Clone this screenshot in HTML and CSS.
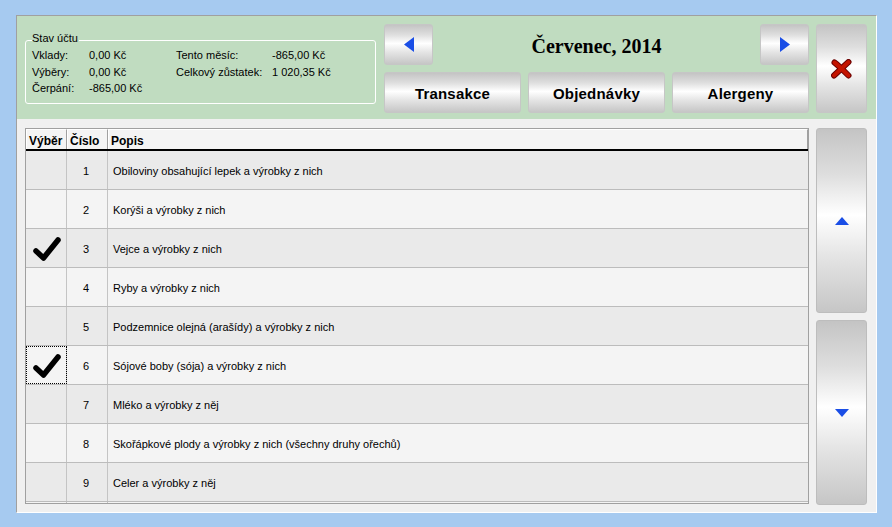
FILE: index.html
```html
<!DOCTYPE html>
<html lang="cs">
<head>
<meta charset="utf-8">
<title>Alergeny</title>
<link rel="stylesheet" href="styles.css">
</head>
<body>
<div class="window">
  <div class="top">
    <div class="groupbox">
      <span class="legend">Stav účtu</span>
      <div class="stats">
        <span>Vklady:</span><span>0,00 Kč</span><span>Tento měsíc:</span><span>-865,00 Kč</span>
        <span>Výběry:</span><span>0,00 Kč</span><span>Celkový zůstatek:</span><span>1 020,35 Kč</span>
        <span>Čerpání:</span><span>-865,00 Kč</span><span></span><span></span>
      </div>
    </div>
    <div class="controls">
      <div class="month">
        <button class="btn nav"><svg width="10" height="15" viewBox="0 0 10 15"><polygon points="10,0 10,15 0,7.5" fill="#1a4ee6"/></svg></button>
        <div class="title">Červenec, 2014</div>
        <button class="btn nav"><svg width="10" height="15" viewBox="0 0 10 15"><polygon points="0,0 0,15 10,7.5" fill="#1a4ee6"/></svg></button>
      </div>
      <button class="btn close"><svg width="21" height="20" viewBox="0 0 21 20">
        <path d="M3.5 3.5 C7 6 12 11 17.5 16.5" stroke="#6a0000" stroke-width="6" stroke-linecap="round" fill="none"/>
        <path d="M17.5 3 C12.5 7.5 8 12 3 16.5" stroke="#6a0000" stroke-width="6" stroke-linecap="round" fill="none"/>
        <path d="M3.5 3.5 C7 6 12 11 17.5 16.5" stroke="#c41400" stroke-width="4" stroke-linecap="round" fill="none"/>
        <path d="M17.5 3 C12.5 7.5 8 12 3 16.5" stroke="#c41400" stroke-width="4" stroke-linecap="round" fill="none"/>
      </svg></button>
      <button class="btn tab">Transakce</button>
      <button class="btn tab">Objednávky</button>
      <button class="btn tab">Alergeny</button>
    </div>
  </div>
  <div class="bottom">
    <div class="grid">
      <div class="head">
        <div class="hcell">Výběr</div>
        <div class="hcell">Číslo</div>
        <div class="hcell">Popis</div>
      </div>
      <div class="row odd"><div class="cell sel"></div><div class="cell num">1</div><div class="cell desc">Obiloviny obsahující lepek a výrobky z nich</div></div>
      <div class="row even"><div class="cell sel"></div><div class="cell num">2</div><div class="cell desc">Korýši a výrobky z nich</div></div>
      <div class="row odd"><div class="cell sel"><svg class="check" width="28" height="26" viewBox="0 0 28 26"><path d="M3 15 L10.5 22 L25 4" stroke="#000" stroke-width="5.5" stroke-linecap="round" stroke-linejoin="round" fill="none"/></svg></div><div class="cell num">3</div><div class="cell desc">Vejce a výrobky z nich</div></div>
      <div class="row even"><div class="cell sel"></div><div class="cell num">4</div><div class="cell desc">Ryby a výrobky z nich</div></div>
      <div class="row odd"><div class="cell sel"></div><div class="cell num">5</div><div class="cell desc">Podzemnice olejná (arašídy) a výrobky z nich</div></div>
      <div class="row even"><div class="cell sel focus"><svg class="check" width="28" height="26" viewBox="0 0 28 26"><path d="M3 15 L10.5 22 L25 4" stroke="#000" stroke-width="5.5" stroke-linecap="round" stroke-linejoin="round" fill="none"/></svg></div><div class="cell num">6</div><div class="cell desc">Sójové boby (sója) a výrobky z nich</div></div>
      <div class="row odd"><div class="cell sel"></div><div class="cell num">7</div><div class="cell desc">Mléko a výrobky z něj</div></div>
      <div class="row even"><div class="cell sel"></div><div class="cell num">8</div><div class="cell desc">Skořápkové plody a výrobky z nich (všechny druhy ořechů)</div></div>
      <div class="row odd"><div class="cell sel"></div><div class="cell num">9</div><div class="cell desc">Celer a výrobky z něj</div></div>
      <div class="row even stub"><div class="cell sel"></div><div class="cell num"></div><div class="cell desc"></div></div>
    </div>
    <div class="scroll">
      <button class="btn sbtn"><svg width="14" height="8" viewBox="0 0 14 8"><polygon points="7,0 14,8 0,8" fill="#1a4ee6"/></svg></button>
      <button class="btn sbtn"><svg width="14" height="8" viewBox="0 0 14 8"><polygon points="0,0 14,0 7,8" fill="#1a4ee6"/></svg></button>
    </div>
  </div>
</div>
</body>
</html>
```

FILE: styles.css
```css
body {
  margin: 0;
  background: #a6caf0;
  font-family: "Liberation Sans", Arial, sans-serif;
  font-size: 11px;
  color: #000;
}

.window {
  margin: 15px 0 0 16px;
  width: 861px;
  height: 498px;
  box-sizing: border-box;
  border: 1px solid;
  border-color: #a0a0a0 #ffffff #ffffff #a0a0a0;
  display: flex;
  flex-direction: column;
}

.top {
  background: #c0dcc0;
  height: 103px;
  flex: none;
  box-sizing: border-box;
  padding: 8px 9px 6px 8px;
  display: flex;
  gap: 8px;
  align-items: flex-start;
}

.groupbox {
  position: relative;
  margin-top: 16px;
  width: 351px;
  height: 64px;
  box-sizing: border-box;
  border: 1px solid #ffffff;
  border-radius: 3px;
  padding: 6px 6px 0;
}

.legend {
  position: absolute;
  top: -10px;
  left: 6px;
  padding: 0 1px 0 0;
  background: #c0dcc0;
  line-height: 14px;
}

.stats {
  display: grid;
  grid-template-columns: 57px 87px 96px auto;
  line-height: 16.5px;
  white-space: nowrap;
}

.controls {
  display: grid;
  grid-template-columns: repeat(3, 137px) 51px;
  grid-template-rows: 41px 41px;
  gap: 7px;
}

.btn {
  margin: 0;
  padding: 0;
  box-sizing: border-box;
  border: 1px solid #c6c6c6;
  border-radius: 3px;
  background: linear-gradient(to bottom, #c4c4c4 0%, #dedede 25%, #ffffff 47%, #e4e4e4 70%, #c6c6c6 100%);
  display: flex;
  align-items: center;
  justify-content: center;
  font-family: "Liberation Sans", Arial, sans-serif;
  color: #000;
}

.month {
  grid-column: 1 / 4;
  display: flex;
  align-items: stretch;
}

.nav {
  width: 49px;
  flex: none;
}

.title {
  flex: 1;
  display: flex;
  align-items: center;
  justify-content: center;
  padding-top: 3px;
  font-family: "Liberation Serif", "Times New Roman", serif;
  font-weight: bold;
  font-size: 20px;
}

.close {
  grid-column: 4;
  grid-row: 1 / 3;
  padding-top: 1px;
}

.tab {
  font-weight: bold;
  font-size: 15px;
  padding-top: 2px;
  letter-spacing: 0.2px;
}

.bottom {
  flex: 1;
  background: #f0f0f0;
  display: flex;
  gap: 7px;
  padding: 9px 9px 7px 8px;
  align-items: flex-start;
}

.grid {
  width: 784px;
  height: 376px;
  flex: none;
  box-sizing: border-box;
  border: 1px solid #a0a0a0;
  overflow: hidden;
  background: #f4f4f4;
}

.head {
  display: grid;
  grid-template-columns: 41px 41px 1fr;
  height: 22px;
  box-sizing: border-box;
  border-bottom: 2px solid #000;
}

.hcell {
  box-sizing: border-box;
  border-top: 1px solid #ffffff;
  border-left: 1px solid #ffffff;
  border-right: 1px solid #a0a0a0;
  background: #f4f4f4;
  font-weight: bold;
  font-size: 12px;
  line-height: 16px;
  padding: 3px 0 0 2px;
}

.row {
  display: grid;
  grid-template-columns: 41px 41px 1fr;
  height: 39px;
  box-sizing: border-box;
  border-bottom: 1px solid #bcbcbc;
}

.odd { background: #eaeaea; }
.even { background: #f4f4f4; }

.cell {
  box-sizing: border-box;
  border-right: 1px solid #c4c4c4;
  display: flex;
  align-items: center;
  padding-top: 2px;
  white-space: nowrap;
}

.sel {
  justify-content: center;
}

.num {
  justify-content: center;
  padding-right: 2px;
}

.desc {
  border-right: none;
  padding-left: 5px;
}

.focus {
  outline: 1px dotted #000;
  outline-offset: -1px;
}

.check {
  display: block;
  margin-left: 1px;
}

.scroll {
  display: flex;
  flex-direction: column;
  gap: 7px;
  width: 51px;
  flex: none;
}

.sbtn {
  height: 185px;
  border-color: #bdbdbd;
}
```
